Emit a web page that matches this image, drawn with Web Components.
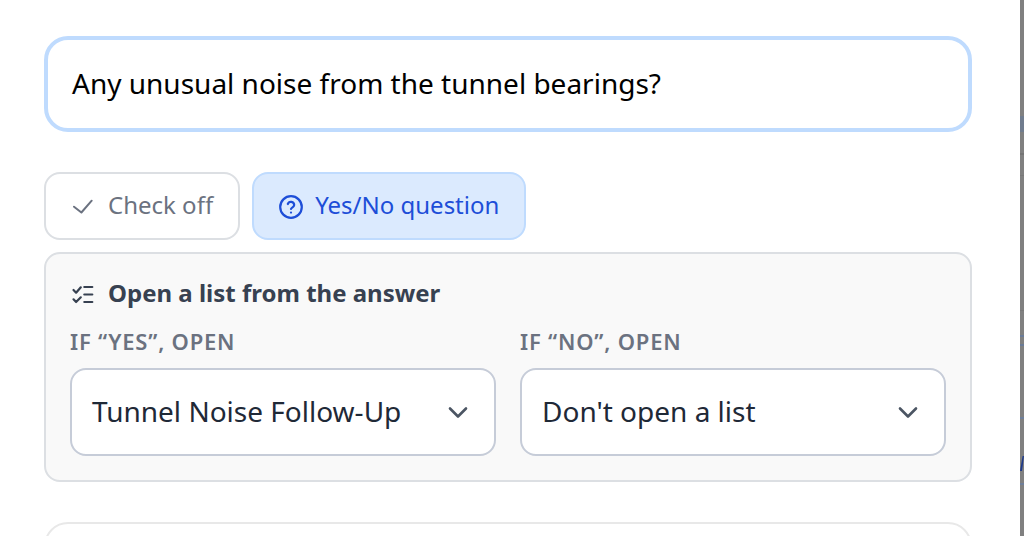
<!DOCTYPE html>
<html><head><meta charset="utf-8"><style>
html,body{margin:0;padding:0;height:536px;overflow:hidden;background:#fff}
body{font-family:"Noto Sans",sans-serif}
</style></head><body>
<sheet-page>
  <question-input>Any unusual noise from the tunnel bearings?</question-input>
  <div style="display:flex;gap:12px;margin-top:40px">
    <mode-button><svg slot="icon" width="24" height="24" viewBox="0 0 24 24" fill="none" stroke="#6b7280" stroke-width="2" stroke-linecap="round" stroke-linejoin="round"><path d="M3 11.7l7.4 5.8L20.7 5.7"/></svg>Check off</mode-button>
    <mode-button active><svg slot="icon" width="24" height="24" viewBox="0 0 24 24" fill="none" stroke="#1d4ed8" stroke-width="2.2" stroke-linecap="round" stroke-linejoin="round"><circle cx="12" cy="12" r="10.8"/><path d="M8.8 9a3.3 3.3 0 0 1 6.4 1.1c0 2.2-3.2 2.7-3.2 3.9"/><path d="M12 17.6h.01"/></svg>Yes/No question</mode-button>
  </div>
  <branch-panel>
    <svg slot="icon" width="24" height="24" viewBox="0 0 24 24" fill="none" stroke="#374151" stroke-width="2.2" stroke-linecap="round" stroke-linejoin="round"><path d="M3.5 10l2.6 2.7 4.7-5.4"/><path d="M3.5 19.3L6.1 22l4.7-4.7"/><path d="M14.3 7h8M14.3 14.5h8M14.3 22h8"/></svg>
    <span slot="title">Open a list from the answer</span>
    <list-select label="IF “YES”, OPEN" value="Tunnel Noise Follow-Up"></list-select>
    <list-select label="IF “NO”, OPEN" value="Don't open a list"></list-select>
  </branch-panel>
  <next-card></next-card>
</sheet-page>
<script>
function def(name,html){customElements.define(name,class extends HTMLElement{constructor(){super();const r=this.attachShadow({mode:'open'});r.innerHTML=typeof html==='function'?html(this):html;}})}
def('sheet-page',`<style>:host{display:flex;height:536px;box-sizing:border-box}
.main{width:1020px;box-sizing:border-box;padding:36px 48px 0 44px;overflow:hidden;background:#fff}
.edge{flex:1;background:#808080;display:block}
svg{display:block}
</style><div class="main"><slot></slot></div><div class="edge"><svg width="4" height="536" viewBox="0 0 4 536">
<rect y="116" width="4" height="16" fill="#707c8e"/><rect y="153" width="4" height="2" fill="#747474"/><rect y="175" width="4" height="1" fill="#787878"/>
<rect y="310" width="4" height="1" fill="#787878"/><rect y="335" width="4" height="2" fill="#6a7b98"/><rect y="344" width="4" height="2" fill="#6a7b98"/>
<rect y="417" width="4" height="2" fill="#6f7f9a"/><rect y="483" width="4" height="2" fill="#6f7f9a"/>
<path d="M0 471 L2.6 456 H4 L2 471Z" fill="#1e3a8a"/></svg></div>`);
def('question-input',`<style>:host{display:flex;align-items:center;height:96px;box-sizing:border-box;border:4px solid #bfdbfe;border-radius:24px;padding:0 24px 2px;font-size:28px;color:#000;background:#fff}</style><slot></slot>`);
def('mode-button',`<style>:host{display:flex;align-items:center;gap:13px;height:68px;box-sizing:border-box;padding:0 25px 4px 25px;border:2px solid #dcdfe3;border-radius:16px;font-size:24px;color:#6b7280;background:#fff}
:host([active]){background:#dbeafe;border-color:#bfdbfe;color:#1d4ed8;gap:12px;padding-right:25px}::slotted(svg){flex:none;margin-bottom:-6px}</style><slot name="icon"></slot><slot></slot>`);
def('branch-panel',`<style>:host{display:block;margin-top:12px;height:230px;box-sizing:border-box;border:2px solid #dcdfe3;border-radius:16px;background:#f9f9f9;padding:24px 24px}
.h{display:flex;align-items:center;gap:14px;height:28px;font-size:24px;font-weight:700;color:#374151}
.g{display:grid;grid-template-columns:426px 426px;gap:24px;margin-top:20px}</style>
<div class="h"><slot name="icon"></slot><slot name="title"></slot></div><div class="g"><slot></slot></div>`);
def('list-select',e=>`<style>:host{display:block}
.l{font-size:22px;font-weight:600;letter-spacing:.8px;color:#6b7280;height:30px;line-height:30px}
.b{margin-top:12px;height:88px;box-sizing:border-box;border:2px solid #c6ccd8;border-radius:16px;background:#fff;display:flex;align-items:center;justify-content:space-between;padding:0 24px 0 20px;font-size:28px;color:#1f2937}
span{margin-top:-2px}svg{flex:none}</style><div class="l">${e.getAttribute('label')}</div><div class="b"><span>${e.getAttribute('value')}</span><svg width="24" height="24" viewBox="0 0 24 24" fill="none" stroke="#4b5563" stroke-width="2.6" stroke-linecap="round" stroke-linejoin="round"><path d="M4 8.5l8 8 8-8"/></svg></div>`);
def('next-card',`<style>:host{display:block;margin-top:40px;height:60px;border:2px solid #e8e8e8;border-radius:24px;background:#fff}</style>`);
</script>
</body></html>
